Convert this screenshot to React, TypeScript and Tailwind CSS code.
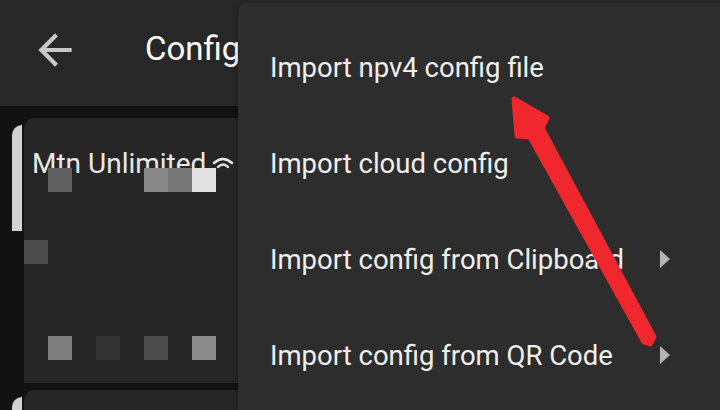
import React from "react";

const menuItems = [
  { label: "Import npv4 config file", sub: false },
  { label: "Import cloud config", sub: false },
  { label: "Import config from Clipboard", sub: true },
  { label: "Import config from QR Code", sub: true },
];

// redaction blocks over the first card: [left, top, colour]
const blocks: [number, number, string][] = [
  [24, 50, "#606060"],
  [120, 50, "#878787"],
  [144, 50, "#777777"],
  [168, 50, "#e1e1e1"],
  [0, 122, "#4b4b4b"],
  [24, 218, "#7f7f7f"],
  [72, 218, "#333333"],
  [120, 218, "#4c4c4c"],
  [168, 218, "#8b8b8b"],
];

const ConfigCard = ({ title, redact }: { title?: string; redact?: boolean }) => (
  <div className="flex">
    <div className="w-[10px] h-[106px] mt-[7px] rounded-tl-[12px] bg-[#d2d2d2]" />
    <div className="relative ml-[2px] flex-1 h-[265px] rounded-tl-[10px] bg-[#262626]">
      {title && (
        <div className="flex items-center gap-[6px] pl-[8px] pt-[29px] text-[28px] leading-[33px] text-[#e8e8e8]">
          <span>{title}</span>
          <svg width="22" height="16" viewBox="0 0 22 16" fill="none" stroke="#e8e8e8" strokeWidth="2.4" strokeLinecap="round">
            <path d="M2 7 Q11 -1 20 7" />
            <path d="M6 11 Q11 6 16 11" />
          </svg>
        </div>
      )}
      {redact &&
        blocks.map(([x, y, c], i) => (
          <div
            key={i}
            className="absolute w-[24px] h-[24px]"
            style={{ left: x, top: y, background: c }}
          />
        ))}
    </div>
  </div>
);

export default function App() {
  return (
    <div className="relative w-[720px] h-[410px] overflow-hidden bg-[#121212] font-['Roboto',sans-serif]">
      <header className="flex items-start h-[106px] bg-[#272727] pt-[25px]">
        <svg className="ml-[30px]" width="50" height="50" viewBox="0 0 24 24" fill="#c8c8c8">
          <path d="M20 11H7.83l5.59-5.59L12 4l-8 8 8 8 1.41-1.41L7.83 13H20v-2z" />
        </svg>
        <h1 className="ml-[65px] mt-[5px] text-[33px] leading-[38px] text-white whitespace-nowrap">Configs</h1>
      </header>

      <div className="flex flex-col gap-[7px] pl-[12px] pt-[12px]">
        <ConfigCard title="Mtn Unlimited" redact />
        <ConfigCard />
      </div>

      {/* overflow menu */}
      <div className="absolute left-[238px] top-[3px] right-0 bottom-[-20px] rounded-tl-[8px] bg-[#2d2d2d] pt-[16px] shadow-[0_1px_4px_rgba(0,0,0,0.4)]">
        {menuItems.map((m) => (
          <div key={m.label} className="flex items-center justify-between h-[96px] pl-[32px] pr-[50px]">
            <span className="text-[27.5px] leading-[33px] text-[#f0f0f0]">{m.label}</span>
            {m.sub && (
              <svg width="10" height="18" viewBox="0 0 10 18">
                <path d="M0 0 L10 9 L0 18 Z" fill="#b4b4b4" />
              </svg>
            )}
          </div>
        ))}
      </div>

      {/* red annotation arrow */}
      <svg className="absolute left-0 top-0 pointer-events-none" width="720" height="410" viewBox="0 0 720 410">
        <polygon
          points="514,99 547,118 542,128 654,337 650,344 644,342 530,137 517,136"
          fill="#f0282d"
          stroke="#f0282d"
          strokeWidth="5"
          strokeLinejoin="round"
        />
      </svg>
    </div>
  );
}
